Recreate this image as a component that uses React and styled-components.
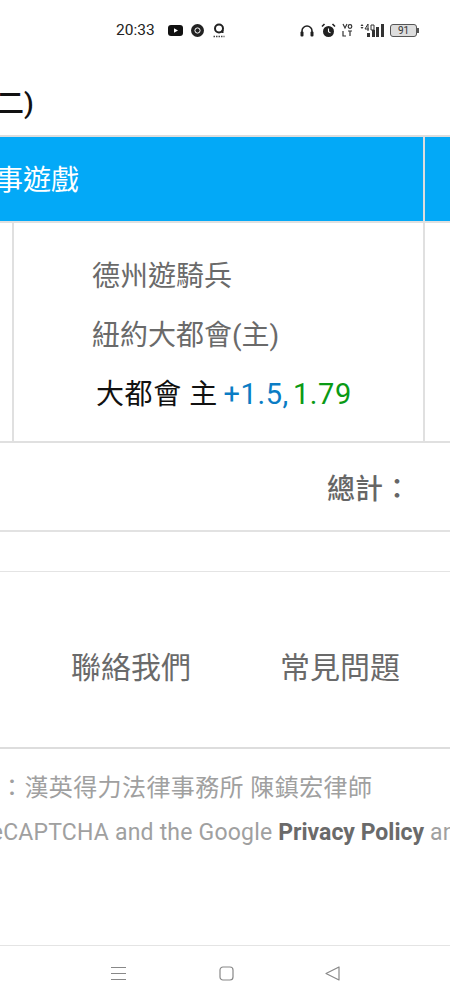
import React from "react";
import styled, { createGlobalStyle } from "styled-components";

const Global = createGlobalStyle`
  html, body { margin: 0; padding: 0; background: #fff; }
  body { font-family: Roboto, "Noto Sans CJK TC", sans-serif; }
`;

const Page = styled.div`
  width: 450px;
  height: 1000px;
  overflow: hidden;
  display: flex;
  flex-direction: column;
  background: #fff;
`;

const StatusBar = styled.div`
  height: 60px;
  flex: none;
  display: flex;
  align-items: center;
  padding: 0 33px 0 116px;
  box-sizing: border-box;
`;
const Time = styled.span`
  font-size: 15.5px;
  color: #222;
  width: 52px;
`;
const StatusLeft = styled.div`
  display: flex;
  align-items: center;
  gap: 8px;
`;
const StatusRight = styled.div`
  margin-left: auto;
  display: flex;
  align-items: center;
  gap: 6.5px;
`;
const Battery = styled.div`
  width: 25px;
  height: 11px;
  border: 1px solid #555;
  border-radius: 3px;
  background: #ddd;
  font-size: 10px;
  line-height: 11px;
  text-align: center;
  color: #333;
  position: relative;
  &::after {
    content: "";
    position: absolute;
    right: -3px;
    top: 3px;
    width: 2px;
    height: 5px;
    background: #555;
  }
`;

const Title = styled.h1`
  margin: 0 0 0 -60px;
  height: 75px;
  flex: none;
  font-size: 28px;
  line-height: 88px;
  font-weight: 500;
  color: #111;
  white-space: nowrap;
`;

const HeaderRow = styled.div`
  height: 84px;
  flex: none;
  display: flex;
  background: #03a9f7;
  border-top: 2px solid #ddd;
`;
const HeaderCell = styled.div`
  width: 423px;
  flex: none;
  box-sizing: content-box;
  font-size: 28px;
  line-height: 88px;
  color: #fff;
  text-indent: -33px;
  white-space: nowrap;
  border-right: 2px solid #ddd;
`;

const BodyRow = styled.div`
  height: 218px;
  flex: none;
  display: flex;
  border-top: 2px solid #e0e0e0;
  border-bottom: 2px solid #e0e0e0;
`;
const BodyGutter = styled.div`
  width: 12px;
  flex: none;
  border-right: 2px solid #e0e0e0;
`;
const BodyCell = styled.div`
  width: 411px;
  flex: none;
  border-right: 2px solid #e0e0e0;
  box-sizing: border-box;
  padding: 24px 0 0 78px;
  display: flex;
  flex-direction: column;
`;
const Team = styled.div`
  font-size: 28px;
  line-height: 59px;
  color: #6a6a6a;
  white-space: nowrap;
`;
const Pick = styled.div`
  font-size: 28px;
  line-height: 59px;
  color: #111;
  white-space: nowrap;
  padding-left: 4px;
  letter-spacing: 0.6px;
`;
const Odd = styled.span`
  font-size: 29px;
  margin-left: ${(p) => p.$gap}px;
  color: ${(p) => p.$color};
`;

const TotalRow = styled.div`
  height: 89px;
  flex: none;
  box-sizing: border-box;
  border-bottom: 2px solid #e2e2e2;
  padding-right: 39px;
  display: flex;
  align-items: center;
  justify-content: flex-end;
  font-size: 28px;
  font-weight: 500;
  color: #666;
`;
const Spacer = styled.div`
  height: 40px;
  flex: none;
  box-sizing: border-box;
  border-bottom: 1px solid #e4e4e4;
`;
const Links = styled.div`
  height: 177px;
  flex: none;
  box-sizing: border-box;
  border-bottom: 2px solid #ddd;
  display: flex;
  gap: 89px;
  padding: 10px 0 0 71px;
  align-items: center;
  font-size: 30px;
  color: #6a6a6a;
  white-space: nowrap;
`;
const Legal = styled.div`
  margin: 22px 0 0 0;
  font-size: 24px;
  line-height: 34px;
  letter-spacing: 0.4px;
  color: #a0a0a0;
  white-space: nowrap;
`;
const Recaptcha = styled.div`
  margin: 11px 0 0 -17px;
  font-size: 23px;
  line-height: 34px;
  letter-spacing: 0.2px;
  color: #a0a0a0;
  white-space: nowrap;
  & b {
    font-weight: 700;
    letter-spacing: 0;
    color: #6a6a6a;
  }
`;
const NavBar = styled.div`
  margin-top: auto;
  height: 55px;
  flex: none;
  box-sizing: border-box;
  border-top: 1px solid #e4e4e4;
  display: flex;
  align-items: center;
  justify-content: space-between;
  padding: 0 110px 0 110px;
`;

const Icon = styled.svg`
  display: block;
  flex: none;
`;

export default function App() {
  return (
    <Page>
      <Global />
      <StatusBar>
        <Time>20:33</Time>
        <StatusLeft>
          <Icon width="15" height="11" viewBox="0 0 15 11">
            <rect width="15" height="11" rx="3" fill="#111" />
            <path d="M6 3.2 10 5.5 6 7.8z" fill="#fff" />
          </Icon>
          <Icon width="13" height="13" viewBox="0 0 13 13">
            <circle cx="6.5" cy="6.5" r="6.5" fill="#222" />
            <circle cx="6.5" cy="6.5" r="2.6" fill="#222" stroke="#fff" strokeWidth="1" />
          </Icon>
          <Icon width="14" height="15" viewBox="0 0 14 15">
            <circle cx="7" cy="5.5" r="4" fill="none" stroke="#222" strokeWidth="2" />
            <path d="M10.5 7v3" stroke="#222" strokeWidth="2" />
            <path d="M1.5 13.5h11" stroke="#444" strokeWidth="1.5" strokeDasharray="1.5 1" />
          </Icon>
        </StatusLeft>
        <StatusRight>
          <Icon width="14" height="13" viewBox="0 0 14 13">
            <path d="M2 11V7a5 5 0 0 1 10 0v4" fill="none" stroke="#222" strokeWidth="1.6" />
            <rect x="0.5" y="7.5" width="3" height="5" rx="1" fill="#222" />
            <rect x="10.5" y="7.5" width="3" height="5" rx="1" fill="#222" />
          </Icon>
          <Icon width="15" height="15" viewBox="0 0 15 15">
            <circle cx="7.5" cy="8.5" r="5.5" fill="#222" />
            <path d="M7.5 5.5v3.2l2 1.2" fill="none" stroke="#fff" strokeWidth="1.1" />
            <path d="M1 3.5 3.5 1M14 3.5 11.5 1" stroke="#222" strokeWidth="1.6" />
          </Icon>
          <Icon width="11" height="15" viewBox="0 0 11 15">
            <path d="M1 1l2 4 2-4M1 8v5h3M6 8h4M8 8v5" fill="none" stroke="#333" strokeWidth="1.2" />
            <circle cx="8" cy="3.5" r="1.8" fill="none" stroke="#333" strokeWidth="1.2" />
          </Icon>
          <Icon width="24" height="15" viewBox="0 0 24 15">
            <path d="M2 1 0.5 3h3zM2 6 .5 4h3z" fill="#333" />
            <path d="M5 6h4M8 1v7M5 6l3-5M11 2h3v5h-3z" fill="none" stroke="#333" strokeWidth="1" />
            <rect x="7" y="10" width="3" height="4" fill="#333" />
            <rect x="12" y="7" width="3" height="7" fill="#333" />
            <rect x="16" y="4" width="3" height="10" fill="#333" />
            <rect x="21" y="1" width="3" height="13" fill="#333" />
          </Icon>
          <Battery>91</Battery>
        </StatusRight>
      </StatusBar>
      <Title>星期二)</Title>
      <HeaderRow>
        <HeaderCell>賽事遊戲</HeaderCell>
      </HeaderRow>
      <BodyRow>
        <BodyGutter />
        <BodyCell>
          <Team>德州遊騎兵</Team>
          <Team>紐約大都會(主)</Team>
          <Pick>
            大都會 主 <Odd $color="#0a7cc4" $gap={-2}>+1.5,</Odd><Odd $color="#0a9a14" $gap={4}>1.79</Odd>
          </Pick>
        </BodyCell>
      </BodyRow>
      <TotalRow>總計：</TotalRow>
      <Spacer />
      <Links>
        <span>聯絡我們</span>
        <span>常見問題</span>
      </Links>
      <Legal>：漢英得力法律事務所 陳鎮宏律師</Legal>
      <Recaptcha>
        reCAPTCHA and the Google <b>Privacy Policy</b> and
      </Recaptcha>
      <NavBar>
        <Icon width="17" height="15" viewBox="0 0 17 15">
          <path d="M1 1.5h15M1 7.5h15M1 13.5h15" stroke="#888" strokeWidth="1.2" />
        </Icon>
        <Icon width="15" height="15" viewBox="0 0 15 15">
          <rect x="1" y="1" width="13" height="13" rx="3" fill="none" stroke="#888" strokeWidth="1.2" />
        </Icon>
        <Icon width="15" height="15" viewBox="0 0 15 15">
          <path d="M14 1v13L1 7.5z" fill="none" stroke="#888" strokeWidth="1.2" strokeLinejoin="round" />
        </Icon>
      </NavBar>
    </Page>
  );
}
